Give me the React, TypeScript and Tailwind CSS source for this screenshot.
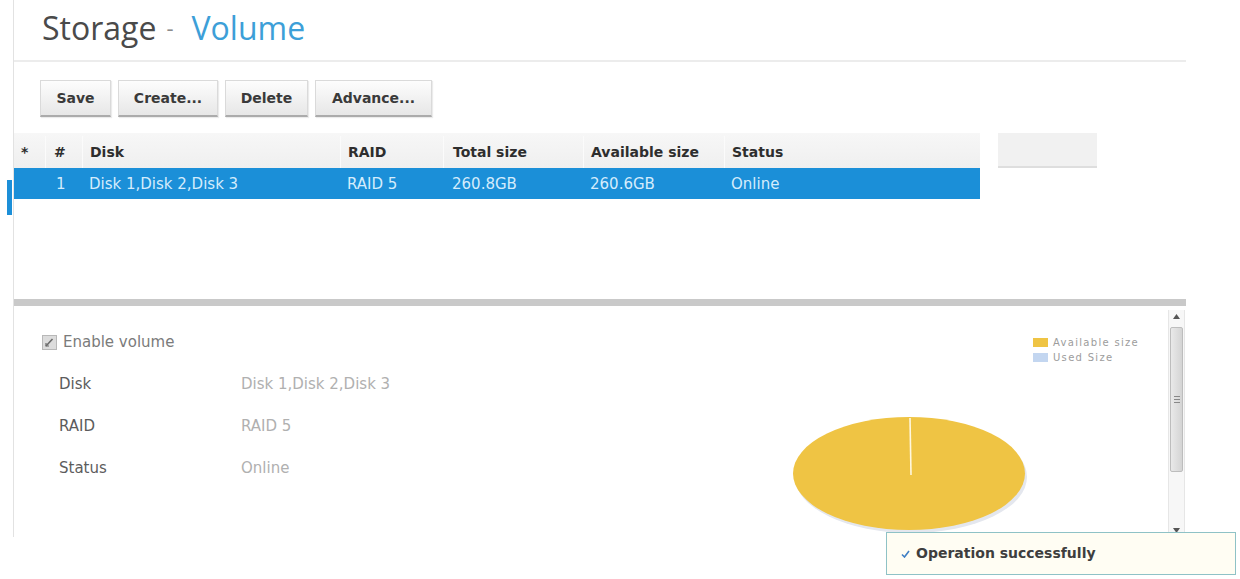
import React from "react";

type Volume = {
  id: number;
  disk: string;
  raid: string;
  total: string;
  available: string;
  status: string;
};

const volumes: Volume[] = [
  {
    id: 1,
    disk: "Disk 1,Disk 2,Disk 3",
    raid: "RAID 5",
    total: "260.8GB",
    available: "260.6GB",
    status: "Online",
  },
];

const toolbar = [
  { label: "Save", w: "w-[71px]" },
  { label: "Create...", w: "w-[100px]" },
  { label: "Delete", w: "w-[83px]" },
  { label: "Advance...", w: "w-[117px]" },
];

const gridCols = "grid grid-cols-[31px_37px_258px_103px_140px_141px_256px]";

function CheckBox() {
  return (
    <svg width="15" height="15" viewBox="0 0 15 15">
      <rect x="0.5" y="0.5" width="14" height="14" fill="#dcdcdc" stroke="#b8b8b8" />
      <path d="M4 11 L10.5 4" stroke="#6a6a6a" strokeWidth="1.6" />
      <path d="M4 8 L4 11 L7 11" stroke="#6a6a6a" strokeWidth="1.2" fill="none" />
    </svg>
  );
}

function PieChart() {
  return (
    <svg width="240" height="120" viewBox="0 0 240 120">
      <ellipse cx="118" cy="60" rx="116" ry="56" fill="#e4e7ee" />
      <ellipse cx="116" cy="56.5" rx="116" ry="56.5" fill="#efc444" />
      <line x1="117" y1="1" x2="118" y2="58" stroke="#fff7de" strokeWidth="1.6" />
    </svg>
  );
}

function Scrollbar() {
  return (
    <div className="w-[17px] h-[225px] mt-[4px] flex flex-col items-center bg-[#f7f7f7] border-x border-[#e6e6e6]">
      <div className="h-[12px] flex items-center justify-center">
        <svg width="7" height="5" viewBox="0 0 7 5">
          <path d="M0 5 L3.5 0 L7 5 Z" fill="#555" />
        </svg>
      </div>
      <div className="mt-[5px] w-[13px] h-[145px] rounded-[2px] border border-[#bdbdbd] bg-linear-to-r from-[#e9e9e9] to-[#d4d4d4] flex flex-col items-center justify-center gap-[2px]">
        <div className="w-[6px] h-px bg-[#888]" />
        <div className="w-[6px] h-px bg-[#888]" />
        <div className="w-[6px] h-px bg-[#888]" />
      </div>
      <div className="flex-1" />
      <div className="h-[10px] flex items-center justify-center">
        <svg width="7" height="5" viewBox="0 0 7 5">
          <path d="M0 0 L3.5 5 L7 0 Z" fill="#555" />
        </svg>
      </div>
    </div>
  );
}

export default function App() {
  return (
    <div className="relative w-[1240px] h-[579px] overflow-hidden bg-white font-['DejaVu_Sans','Verdana',sans-serif] text-[#333]">
      <div className="flex">
        {/* row marker gutter */}
        <div className="w-[13px] shrink-0 pt-[180px] pl-[7px]">
          <div className="w-[5px] h-[35px] bg-[#1c8fd8]" />
        </div>

        <div className="w-[1173px] h-[537px] shrink-0 border-l border-[#e2e2e2] flex flex-col">
          {/* page title */}
          <div className="h-[60px] pl-[28px] pt-[9px] font-['Open_Sans',sans-serif] text-[32px] leading-[38px] whitespace-nowrap flex items-baseline">
            <span className="text-[#4a4a4a]">Storage</span>
            <span className="text-[#8c8c8c] text-[22px] ml-[10px] mr-[18px] -translate-y-[4px]">-</span>
            <span className="text-[#3d9fd8]">Volume</span>
          </div>
          <div className="h-[2px] bg-[#ececec]" />

          {/* toolbar */}
          <div className="flex gap-[7px] pl-[26px] pt-[18px]">
            {toolbar.map((b) => (
              <button
                key={b.label}
                className={`${b.w} h-[37px] flex items-center justify-center text-[14px] font-bold text-[#3a3a3a] bg-linear-to-b from-[#fdfdfd] to-[#e7e7e7] border border-[#dadada] border-b-2 border-b-[#ababab] shadow-[1px_1px_1px_rgba(0,0,0,0.08)]`}
              >
                {b.label}
              </button>
            ))}
          </div>

          {/* volume table */}
          <div className="flex mt-[16px] h-[166px]">
            <div className="w-[966px]">
              <div className={`${gridCols} h-[35px] pt-[3px] bg-linear-to-b from-[#f7f7f7] to-[#efefef] text-[14px] font-bold text-[#2e2e2e]`}>
                <div className="flex items-center pl-[7px]">*</div>
                <div className="flex items-center pl-[8px] border-l border-[#fbfbfb]">#</div>
                <div className="flex items-center pl-[7px] border-l border-[#fbfbfb]">Disk</div>
                <div className="flex items-center pl-[7px] border-l border-[#fbfbfb]">RAID</div>
                <div className="flex items-center pl-[9px] border-l border-[#fbfbfb]">Total size</div>
                <div className="flex items-center pl-[7px] border-l border-[#fbfbfb]">Available size</div>
                <div className="flex items-center pl-[7px] border-l border-[#fbfbfb]">Status</div>
              </div>
              {volumes.map((v) => (
                <div
                  key={v.id}
                  className={`${gridCols} h-[31px] pt-[2px] bg-[#1b8fd8] text-[15px] text-[#d4ecfc] whitespace-nowrap`}
                >
                  <div />
                  <div className="flex items-center pl-[11px]">{v.id}</div>
                  <div className="flex items-center pl-[7px]">{v.disk}</div>
                  <div className="flex items-center pl-[7px]">{v.raid}</div>
                  <div className="flex items-center pl-[9px]">{v.total}</div>
                  <div className="flex items-center pl-[7px]">{v.available}</div>
                  <div className="flex items-center pl-[7px]">{v.status}</div>
                </div>
              ))}
            </div>
            <div className="ml-[18px] w-[99px] h-[35px] bg-[#f1f1f1] border-b-2 border-[#dedede]" />
          </div>

          {/* splitter */}
          <div className="h-[7px] bg-[#c9c9c9]" />

          {/* volume details */}
          <div className="flex-1 flex">
            <div className="flex-1 pl-[28px] pt-[15px]">
              <div className="h-[42px] flex items-center gap-[6px] text-[15px] text-[#7b7b7b]">
                <CheckBox />
                <span>Enable volume</span>
              </div>
              <div className="pl-[17px] grid grid-cols-[182px_1fr] text-[15px]">
                <div className="h-[42px] flex items-center text-[#5c5c5c]">Disk</div>
                <div className="h-[42px] flex items-center text-[#b0b0b0]">Disk 1,Disk 2,Disk 3</div>
                <div className="h-[42px] flex items-center text-[#5c5c5c]">RAID</div>
                <div className="h-[42px] flex items-center text-[#b0b0b0]">RAID 5</div>
                <div className="h-[42px] flex items-center text-[#5c5c5c]">Status</div>
                <div className="h-[42px] flex items-center text-[#b0b0b0]">Online</div>
              </div>
            </div>

            <div className="w-[357px] flex flex-col">
              <div className="ml-[240px] mt-[31px] flex flex-col gap-[4px] text-[10px] leading-[11px] tracking-[1.3px] text-[#9c9c9c] whitespace-nowrap">
                <div className="flex items-center gap-[5px]">
                  <div className="w-[15px] h-[9px] bg-[#efc444]" />
                  <span>Available size</span>
                </div>
                <div className="flex items-center gap-[5px]">
                  <div className="w-[15px] h-[9px] bg-[#c3d6f0]" />
                  <span>Used Size</span>
                </div>
              </div>
              <div className="mt-[54px]">
                <PieChart />
              </div>
            </div>

            <div className="w-[18px]" />
            <Scrollbar />
            <div className="w-px" />
          </div>
        </div>
      </div>

      {/* status toast */}
      <div className="absolute left-[886px] top-[532px] w-[350px] h-[43px] bg-[#fffdf3] border border-[#8fc2c6] flex items-center pl-[14px] gap-[6px]">
        <svg width="9" height="8" viewBox="0 0 9 8">
          <path d="M1 4.5 L3.5 7 L8 1" stroke="#3f7fc4" strokeWidth="1.6" fill="none" />
        </svg>
        <span className="text-[14px] font-bold text-[#3e3e3e]">Operation successfully</span>
      </div>
    </div>
  );
}
